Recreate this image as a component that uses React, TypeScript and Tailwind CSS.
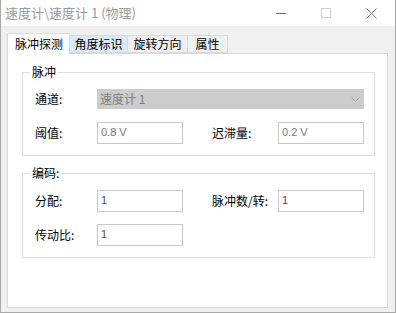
const font = { fontFamily: '"Noto Sans CJK SC", "Noto Sans", sans-serif' };

const Field = ({ value, dim }: { value: string; dim?: boolean }) => (
  <div
    className={`w-[86px] h-[22px] border border-[#c9c9c9] bg-white pl-[3px] text-[11px] leading-[18px] ${dim ? 'text-[#7a7a7a]' : 'text-[#4a4a5a]'}`}
    style={{ fontFamily: '"Liberation Sans", Arial, sans-serif' }}
  >
    {value}
  </div>
);

const Label = ({ text, w }: { text: string; w: string }) => (
  <div className={`${w} text-[12px] leading-[22px] text-black`}>{text}</div>
);

const Group = ({ title, children, className }: { title: string; children: React.ReactNode; className?: string }) => (
  <div className={`relative border border-[#dcdcdc] ${className ?? ''}`}>
    <span className="absolute left-[7px] top-[-9px] bg-white px-[2px] text-[12px] leading-[16px] text-black">{title}</span>
    {children}
  </div>
);

export default function App() {
  return (
    <div className="w-[396px] h-[313px] bg-[#f0f0f0] border-x border-b border-[#a9a9a9] flex flex-col" style={font}>
      <div className="h-[26px] bg-white flex items-center shrink-0">
        <span className="pl-[4px] text-[13px] text-[#9a9a9a] leading-[26px]">速度计\速度计 1 (物理)</span>
        <div className="ml-auto flex items-center h-full">
          <svg width="10" height="10" viewBox="0 0 10 10" className="mr-[35px]">
            <line x1="0" y1="5.5" x2="10" y2="5.5" stroke="#6a6a6a" strokeWidth="1" />
          </svg>
          <svg width="10" height="10" viewBox="0 0 10 10" className="mr-[35px]">
            <rect x="0.5" y="0.5" width="9" height="9" fill="none" stroke="#cfcfcf" strokeWidth="1" />
          </svg>
          <svg width="11" height="11" viewBox="0 0 11 11" className="mr-[18px]">
            <path d="M0.5 0.5 L10.5 10.5 M10.5 0.5 L0.5 10.5" stroke="#7a7a7a" strokeWidth="1" />
          </svg>
        </div>
      </div>

      <div className="pl-[6px] pt-[7px] flex flex-col">
        <div className="flex items-end h-[21px] text-[12px] text-black">
          <div className="relative z-10 w-[63px] h-[21px] bg-white border-x border-t border-[#d9d9d9] flex items-center justify-center leading-[18px] pl-[1px]">
            脉冲探测
          </div>
          <div className="w-[58px] h-[18px] mb-[1px] bg-[#d9eaf8] border-y border-r border-[#d9d9d9] flex items-center justify-center leading-[16px]">
            角度标识
          </div>
          <div className="w-[60px] h-[18px] mb-[1px] bg-[#f0f0f0] border-y border-r border-[#d9d9d9] flex items-center justify-center leading-[16px]">
            旋转方向
          </div>
          <div className="w-[40px] h-[18px] mb-[1px] bg-[#f0f0f0] border-y border-r border-[#d9d9d9] flex items-center justify-center leading-[16px]">
            属性
          </div>
        </div>

        <div className="mt-[-1px] w-[381px] h-[255px] bg-white border border-[#d9d9d9] pl-[14px] pt-[18px]">
          <Group title="脉冲" className="w-[353px] h-[84px] pl-[12px] pt-[16px]">
            <div className="flex items-center h-[20px]">
              <Label text="通道:" w="w-[62px]" />
              <div className="w-[267px] h-[20px] bg-[#cccccc] flex items-center pl-[3px] text-[12px] text-[#7d7d7d] leading-[20px]">
                <span>速度计 1</span>
                <svg width="9" height="5" viewBox="0 0 9 5" className="ml-auto mr-[4px]">
                  <path d="M0.5 0.5 L4.5 4.5 L8.5 0.5" fill="none" stroke="#a8a8a8" strokeWidth="1" />
                </svg>
              </div>
            </div>
            <div className="flex items-center mt-[13px]">
              <Label text="阈值:" w="w-[62px]" />
              <Field value="0.8 V" dim />
              <div className="w-[29px]" />
              <Label text="迟滞量:" w="w-[66px]" />
              <Field value="0.2 V" dim />
            </div>
          </Group>

          <Group title="编码:" className="mt-[17px] w-[353px] h-[85px] pl-[12px] pt-[16px]">
            <div className="flex items-center">
              <Label text="分配:" w="w-[62px]" />
              <Field value="1" />
              <div className="w-[29px]" />
              <Label text="脉冲数/转:" w="w-[66px]" />
              <Field value="1" />
            </div>
            <div className="flex items-center mt-[12px]">
              <Label text="传动比:" w="w-[62px]" />
              <Field value="1" />
            </div>
          </Group>
        </div>
      </div>
    </div>
  );
}
